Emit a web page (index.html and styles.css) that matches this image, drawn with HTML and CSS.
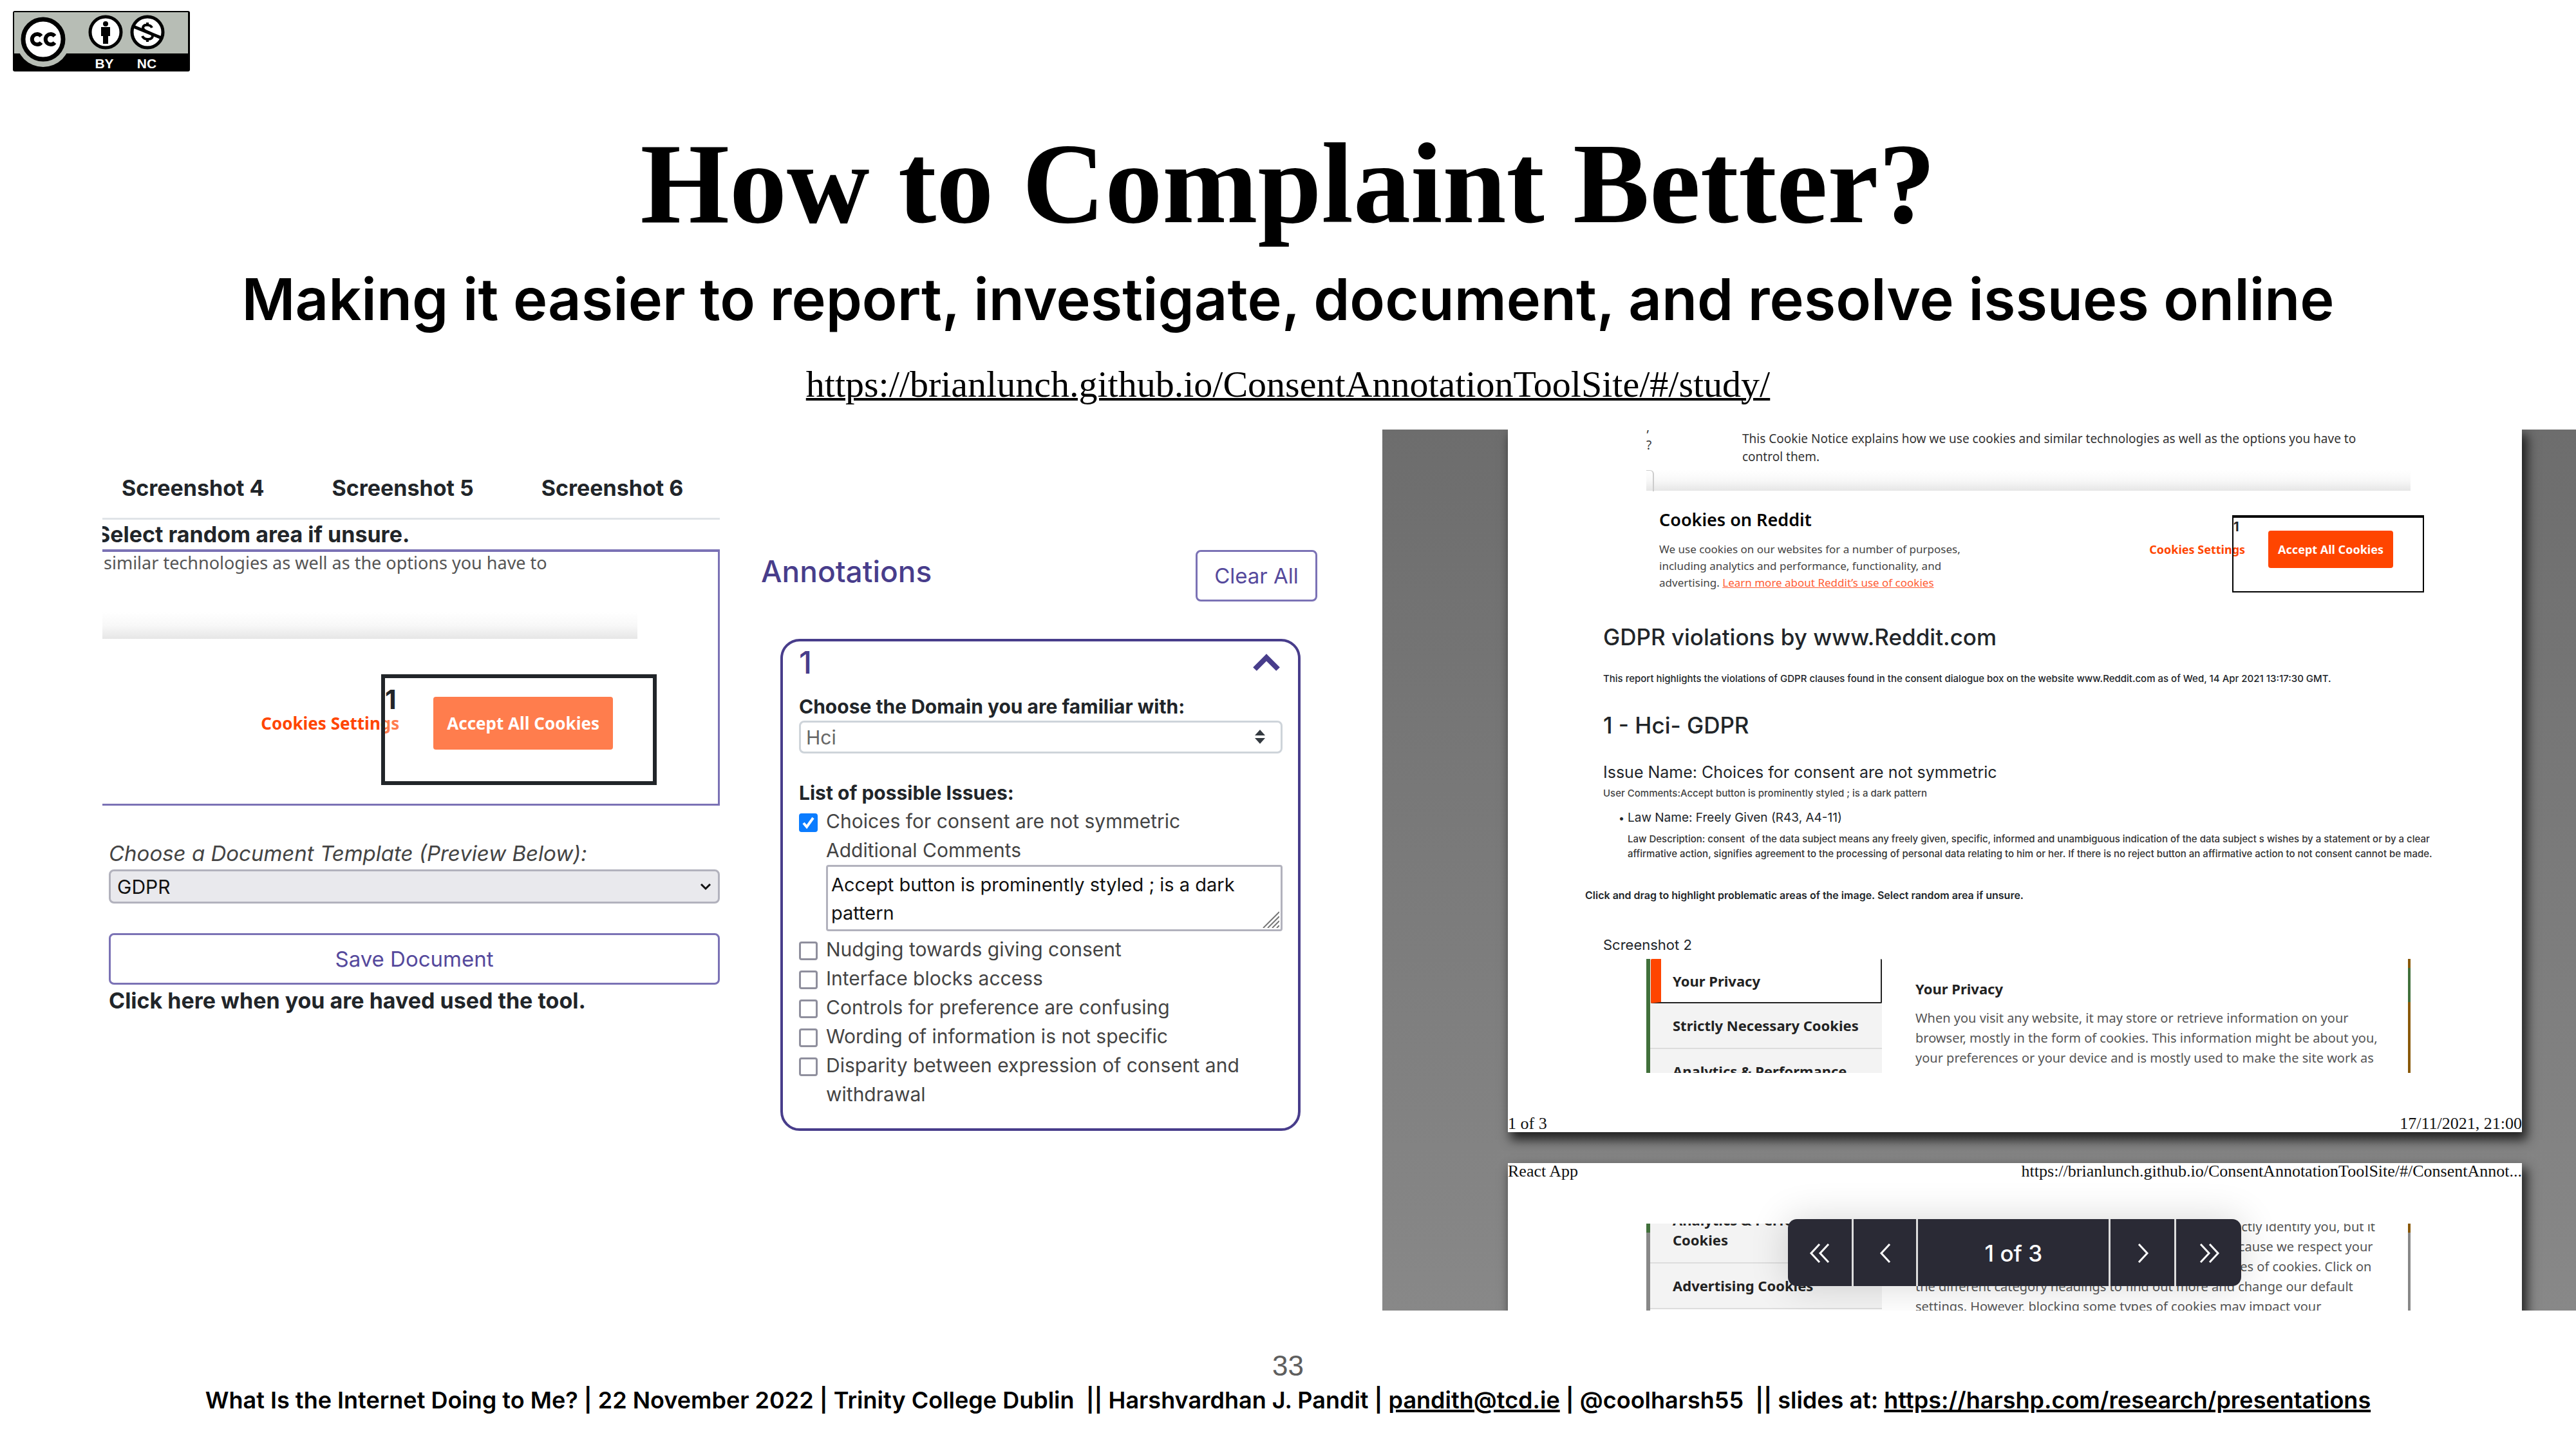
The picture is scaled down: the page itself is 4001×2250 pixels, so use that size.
FILE: index.html
```html
<!DOCTYPE html>
<html lang="en">
<head>
<meta charset="utf-8">
<title>How to Complaint Better?</title>
<link rel="stylesheet" href="styles.css">
</head>
<body>
<header class="slide-header">
  <svg class="license" viewBox="0 0 275 94" role="img" aria-label="Creative Commons BY NC">
    <rect x="0" y="0" width="275" height="94" rx="3" fill="#000"/>
    <rect x="2" y="2" width="270" height="64" fill="#b7bdb5"/>
    <circle cx="47" cy="45" r="42" fill="#b7bdb5"/>
    <circle cx="47" cy="44" r="31" fill="#fff" stroke="#000" stroke-width="7"/>
    <path d="M44 39a8 8 0 1 0 0 10M65 39a8 8 0 1 0 0 10" fill="none" stroke="#000" stroke-width="6"/>
    <circle cx="144" cy="33" r="24" fill="#fff" stroke="#000" stroke-width="5"/>
    <circle cx="144" cy="20" r="4"/>
    <path d="M137 25h14v14h-3v12h-8V39h-3z"/>
    <circle cx="209" cy="33" r="24" fill="#fff" stroke="#000" stroke-width="5"/>
    <path d="M216 26c-2-5-13-6-14 0 0 7 15 6 15 13 0 6-13 7-16 0M209 18v5M209 43v5" fill="none" stroke="#000" stroke-width="4"/>
    <path d="M187 24l44 18" stroke="#000" stroke-width="5"/>
    <text class="license-text" x="142" y="89">BY</text>
    <text class="license-text" x="208" y="89">NC</text>
  </svg>
  <h1 class="title">How to Complaint Better?</h1>
  <p class="subtitle">Making it easier to report, investigate, document, and resolve issues online</p>
  <a class="study-link" href="https://brianlunch.github.io/ConsentAnnotationToolSite/#/study/">https://brianlunch.github.io/ConsentAnnotationToolSite/#/study/</a>
</header>

<main class="figures">
  <section class="capture">
    <nav class="tabs">
      <a class="tab" href="#s4">Screenshot 4</a>
      <a class="tab" href="#s5">Screenshot 5</a>
      <a class="tab" href="#s6">Screenshot 6</a>
    </nav>
    <p class="hint">Select random area if unsure.</p>
    <div class="canvas">
      <p class="canvas-text">similar technologies as well as the options you have to</p>
      <div class="fade"></div>
      <div class="consent">
        <a class="consent-link" href="#settings">Cookies Settings</a>
        <button class="consent-accept" type="button">Accept All Cookies</button>
        <div class="mark">1</div>
      </div>
    </div>
    <form class="export">
      <label class="export-label" for="template">Choose a Document Template (Preview Below):</label>
      <div class="picker">
        <select class="template" id="template"><option>GDPR</option></select>
        <svg class="picker-icon" viewBox="0 0 18 12"><path d="M2 2l7 7 7-7" fill="none" stroke="#111" stroke-width="3"/></svg>
      </div>
      <button class="outline save" type="button">Save Document</button>
      <p class="export-note">Click here when you are haved used the tool.</p>
    </form>
  </section>

  <section class="annotations">
    <div class="annotations-head">
      <h2 class="annotations-title">Annotations</h2>
      <button class="outline clear" type="button">Clear All</button>
    </div>
    <form class="card">
      <div class="card-head">
        <span class="card-number">1</span>
        <svg class="card-toggle" viewBox="0 0 44 28"><path d="M4 24L22 6l18 18" fill="none" stroke="#483d8b" stroke-width="8"/></svg>
      </div>
      <label class="field-label" for="domain">Choose the Domain you are familiar with:</label>
      <div class="picker">
        <select class="domain" id="domain"><option>Hci</option></select>
        <svg class="picker-icon domain-icon" viewBox="0 0 16 22"><path d="M0 9l8-9 8 9zM0 13h16l-8 9z" fill="#343a40"/></svg>
      </div>
      <fieldset class="issues">
        <legend class="field-label">List of possible Issues:</legend>
        <label class="issue"><input class="tick" type="checkbox" checked><span>Choices for consent are not symmetric</span></label>
        <div class="comment">
          <label class="comment-label" for="comment">Additional Comments</label>
          <div class="comment-box">
            <textarea class="comment-input" id="comment" rows="2">Accept button is prominently styled ; is a dark pattern</textarea>
            <svg class="grip" viewBox="0 0 26 26"><path d="M1 26L26 1M8 26L26 8M15 26l11-11M22 26l4-4" stroke="#777" stroke-width="2"/></svg>
          </div>
        </div>
        <label class="issue"><input class="tick" type="checkbox"><span>Nudging towards giving consent</span></label>
        <label class="issue"><input class="tick" type="checkbox"><span>Interface blocks access</span></label>
        <label class="issue"><input class="tick" type="checkbox"><span>Controls for preference are confusing</span></label>
        <label class="issue"><input class="tick" type="checkbox"><span>Wording of information is not specific</span></label>
        <label class="issue"><input class="tick" type="checkbox"><span>Disparity between expression of consent and withdrawal</span></label>
      </fieldset>
    </form>
  </section>

  <section class="viewer">
    <article class="sheet">
      <div class="shot">
        <div class="notice">
          <p class="notice-edge">,<br>?</p>
          <p class="notice-text">This Cookie Notice explains how we use cookies and similar technologies as well as the options you have to<br>control them.</p>
        </div>
        <div class="fade small"></div>
        <div class="banner">
          <div class="banner-text">
            <h3 class="banner-title">Cookies on Reddit</h3>
            <p class="banner-body">We use cookies on our websites for a number of purposes,<br>including analytics and performance, functionality, and<br>advertising. <a class="learn" href="#cookies">Learn more about Reddit’s use of cookies</a></p>
          </div>
          <div class="consent small">
            <a class="consent-link" href="#settings">Cookies Settings</a>
            <button class="consent-accept" type="button">Accept All Cookies</button>
            <div class="mark">1</div>
          </div>
        </div>
      </div>
      <div class="report">
        <h2 class="report-title">GDPR violations by www.Reddit.com</h2>
        <p class="report-intro">This report highlights the violations of GDPR clauses found in the consent dialogue box on the website www.Reddit.com as of Wed, 14 Apr 2021 13:17:30 GMT.</p>
        <h2 class="report-title">1 - Hci- GDPR</h2>
        <h3 class="issue-title">Issue Name: Choices for consent are not symmetric</h3>
        <p class="issue-comment">User Comments:Accept button is prominently styled ; is a dark pattern</p>
        <ul class="laws">
          <li class="law">
            <h4 class="law-title">Law Name: Freely Given (R43, A4-11)</h4>
            <p class="law-text">Law Description: consent&nbsp; of the data subject means any freely given, specific, informed and unambiguous indication of the data subject s wishes by a statement or by a clear<br>affirmative action, signifies agreement to the processing of personal data relating to him or her. If there is no reject button an affirmative action to not consent cannot be made.</p>
          </li>
        </ul>
      </div>
      <p class="report-hint">Click and drag to highlight problematic areas of the image. Select random area if unsure.</p>
      <h3 class="shot-title">Screenshot 2</h3>
      <div class="shot privacy">
        <div class="menu">
          <a class="menu-item active" href="#privacy">Your Privacy</a>
          <a class="menu-item" href="#necessary">Strictly Necessary Cookies</a>
          <a class="menu-item" href="#analytics">Analytics &amp; Performance<br>Cookies</a>
        </div>
        <div class="privacy-text">
          <h4 class="privacy-title">Your Privacy</h4>
          <p class="privacy-body">When you visit any website, it may store or retrieve information on your<br>browser, mostly in the form of cookies. This information might be about you,<br>your preferences or your device and is mostly used to make the site work as<br>you expect it to. The information does not usually directly identify you, but it</p>
        </div>
      </div>
      <footer class="sheet-foot"><span>1 of 3</span><span>17/11/2021, 21:00</span></footer>
    </article>
    <article class="sheet next">
      <header class="sheet-head"><span>React App</span><span>https://brianlunch.github.io/ConsentAnnotationToolSite/#/ConsentAnnot...</span></header>
      <div class="shot privacy continued">
        <div class="menu">
          <a class="menu-item" href="#analytics">Analytics &amp; Performance<br>Cookies</a>
          <a class="menu-item" href="#advertising">Advertising Cookies</a>
        </div>
        <div class="privacy-text">
          <p class="privacy-body">you expect it to. The information does not usually directly identify you, but it<br>can give you a more personalized web experience. Because we respect your<br>right to privacy, you can choose not to allow some types of cookies. Click on<br>the different category headings to find out more and change our default<br>settings. However, blocking some types of cookies may impact your</p>
        </div>
      </div>
    </article>
    <div class="pager">
      <button class="pager-button" type="button" aria-label="First page"><svg class="pager-icon" viewBox="0 0 34 30"><path d="M16 1L3 15l13 14M30 1L17 15l13 14"/></svg></button>
      <button class="pager-button" type="button" aria-label="Previous page"><svg class="pager-icon" viewBox="0 0 34 30"><path d="M24 1L11 15l13 14"/></svg></button>
      <span class="pager-label">1 of 3</span>
      <button class="pager-button" type="button" aria-label="Next page"><svg class="pager-icon" viewBox="0 0 34 30"><path d="M11 1l13 14-13 14"/></svg></button>
      <button class="pager-button" type="button" aria-label="Last page"><svg class="pager-icon" viewBox="0 0 34 30"><path d="M4 1l13 14L4 29M18 1l13 14-13 14"/></svg></button>
    </div>
  </section>
</main>

<footer class="slide-footer">
  <p class="slide-number">33</p>
  <p class="credits">What Is the Internet Doing to Me? | 22 November 2022 | Trinity College Dublin&nbsp; || Harshvardhan J. Pandit | <a class="credit-link" href="mailto:pandith@tcd.ie">pandith@tcd.ie</a> | @coolharsh55&nbsp; || slides at: <a class="credit-link" href="https://harshp.com/research/presentations">https://harshp.com/research/presentations</a></p>
</footer>
</body>
</html>
```
FILE: styles.css
```css
* { box-sizing: border-box; }

body {
  margin: 0;
  background: #fff;
  color: #212529;
  font-family: Inter, "Liberation Sans", sans-serif;
  --purple: #483d8b;
  --orange: #ff4500;
}

h1, h2, h3, h4, p, ul { margin: 0; padding: 0; font-weight: inherit; }
a { color: inherit; text-decoration: none; }
button, select, textarea { font-family: inherit; margin: 0; }

/* Slide heading */
.slide-header {
  display: flex;
  flex-direction: column;
  align-items: center;
  padding: 17px 20px 30px;
  color: #000;
}
.license { align-self: flex-start; width: 275px; height: 94px; }
.license-text {
  fill: #fff;
  font: bold 21px "Liberation Sans", sans-serif;
  text-anchor: middle;
}
.title {
  margin-top: 74px;
  font: bold 178px/200px "Liberation Serif", serif;
}
.subtitle {
  margin: 30px 0 42px;
  font-size: 90px;
  font-weight: 600;
  line-height: 100px;
}
.study-link {
  font: 58px/80px "Liberation Serif", serif;
  text-decoration: underline;
  text-decoration-thickness: 4px;
}

.figures {
  display: grid;
  grid-template-columns: 959fr 864fr 1891fr;
  column-gap: 64px;
  align-items: start;
  padding-left: 159px;
}

/* Screenshot annotator */
.capture { padding-top: 69px; overflow: hidden; }
.tabs {
  display: flex;
  gap: 105px;
  padding: 0 0 24px 30px;
  border-bottom: 3px solid #e0e4e8;
  font-size: 34px;
  font-weight: 700;
  line-height: 44px;
}
.hint {
  text-indent: -10px;
  font-size: 34px;
  font-weight: 700;
  line-height: 46px;
}
.canvas {
  padding-bottom: 84px;
  border: solid #7b72b5;
  border-width: 4px 3px 3px 0;
}
.canvas-text {
  padding-left: 2px;
  color: #555;
  font: 27px/34px "Noto Sans", sans-serif;
}
.fade {
  height: 42px;
  margin: 59px 125px 90px 0;
  background: linear-gradient(#fff, #f8f8f8 50%, #e6e6e6);
}
.consent {
  position: relative;
  display: flex;
  justify-content: flex-end;
  align-items: center;
  gap: 53px;
  padding-right: 163px;
  font: bold 26px/34px "Noto Sans", sans-serif;
}
.consent-link { color: var(--orange); }
.consent-accept {
  height: 82px;
  padding: 0 21px;
  border: 0;
  border-radius: 4px;
  background: var(--orange);
  color: #fff;
  font: inherit;
}
.mark {
  position: absolute;
  top: -35px;
  right: 95px;
  width: 428px;
  height: 172px;
  border: 6px solid #212529;
  padding-top: 8px;
  background: rgba(255, 255, 255, .3);
  font: 700 41px/50px Inter, sans-serif;
}

.export {
  display: flex;
  flex-direction: column;
  padding: 52px 0 0 10px;
  font-size: 33px;
  line-height: 44px;
}
.export-label { color: #444; font-style: italic; }
.picker { position: relative; display: flex; }
.template, .domain { appearance: none; width: 100%; }
.template {
  height: 53px;
  margin-top: 3px;
  padding: 0 10px;
  border: 3px solid #b2b2bd;
  border-radius: 8px;
  background: #e9e9ed;
  color: #111;
  font-size: 30px;
}
.picker-icon {
  position: absolute;
  top: 24px;
  right: 13px;
  width: 18px;
  height: 12px;
}
.outline {
  height: 80px;
  border: 3px solid #7b72b5;
  border-radius: 8px;
  background: #fff;
  color: #55499c;
  font-size: 33px;
}
.save { margin: 46px 0 3px; }
.export-note { font-size: 34px; font-weight: 700; }

/* Annotation panel */
.annotations { padding-top: 187px; }
.annotations-head {
  display: flex;
  justify-content: space-between;
  align-items: flex-start;
  color: var(--purple);
}
.annotations-title { font-size: 46px; font-weight: 500; line-height: 66px; }
.clear { width: 189px; padding: 0; }
.card {
  margin: 58px 26px 0 30px;
  padding: 7px 24px 30px 25px;
  border: 4px solid var(--purple);
  border-radius: 30px;
  font-size: 30px;
  line-height: 45px;
}
.card-head {
  display: flex;
  justify-content: space-between;
  align-items: center;
  padding-right: 3px;
  margin-bottom: 20px;
  color: var(--purple);
  font-size: 48px;
  font-weight: 500;
  line-height: 52px;
}
.card-toggle { width: 44px; height: 28px; }
.field-label { display: block; padding: 0; font-weight: 700; line-height: 44px; }
.domain {
  height: 51px;
  padding: 0 8px;
  border: 3px solid #ced4da;
  border-radius: 8px;
  background: #fff;
  color: #666;
  font-size: 30px;
}
.domain-icon { top: 14px; right: 27px; width: 16px; height: 22px; }
.issues { margin: 39px 0 0; padding: 0; border: 0; min-width: 0; color: #444; }
.issues .field-label { color: #212529; }
.issue { display: flex; gap: 13px; align-items: flex-start; }
.tick {
  appearance: none;
  flex: none;
  width: 29px;
  height: 29px;
  margin: 10px 0 0;
  border: 3px solid #8f8f9d;
  border-radius: 4px;
  background: #fff;
}
.tick:checked {
  border-color: #0a7cff;
  background: #0a7cff url("data:image/svg+xml,%3Csvg xmlns='http://www.w3.org/2000/svg' viewBox='0 0 23 23'%3E%3Cpath d='M4 12l5 6L19 4' fill='none' stroke='white' stroke-width='4'/%3E%3C/svg%3E");
}
.comment { display: flex; flex-direction: column; padding: 0 0 6px 42px; }
.comment-box { position: relative; display: flex; }
.comment-input {
  width: 100%;
  height: 103px;
  padding: 6px 5px;
  border: 3px solid #b2b2bd;
  border-radius: 4px;
  overflow: hidden;
  resize: none;
  color: #111;
  font-size: 29px;
  line-height: 44px;
}
.grip { position: absolute; right: 5px; bottom: 5px; width: 26px; height: 26px; }

/* Document preview */
.viewer {
  position: relative;
  height: 1368px;
  margin-left: 37px;
  padding: 0 84px 0 195px;
  overflow: hidden;
  background: linear-gradient(#6d6d6d, #888);
}
.sheet {
  background: #fff;
  box-shadow: 6px 10px 16px 2px rgba(0, 0, 0, .75);
}
.next { margin-top: 48px; }
.shot { margin: 0 173px 0 215px; font-family: "Noto Sans", sans-serif; }
.notice {
  display: grid;
  grid-template-columns: 149px 1fr;
  color: #333;
  font-size: 19px;
  line-height: 28px;
  white-space: nowrap;
}
.notice-edge { margin-top: -18px; }
.fade.small { height: 32px; margin: 7px 0 28px; }
.fade.small::before {
  content: "";
  display: block;
  width: 10px;
  height: 32px;
  border: solid #ccc;
  border-width: 1px 2px 0 0;
  border-top-right-radius: 6px;
}
.banner { display: flex; justify-content: space-between; align-items: flex-start; padding-left: 20px; }
.banner-title { font-size: 27px; font-weight: 600; line-height: 34px; color: #000; }
.banner-body { margin-top: 16px; color: #444; font-size: 17px; line-height: 26px; }
.learn { color: #ff5c33; text-decoration: underline; }
.consent.small {
  gap: 36px;
  margin-top: 34px;
  padding-right: 27px;
  font-size: 18px;
}
.small .consent-accept { height: 58px; padding: 0 15px; }
.small .mark {
  top: -24px;
  right: -21px;
  width: 298px;
  height: 120px;
  border-width: 4px 2px 2px;
  border-color: #000;
  padding-top: 2px;
  background: none;
  font-size: 20px;
  line-height: 24px;
}

.report { padding: 47px 0 0 148px; font-size: 15px; line-height: 24px; white-space: nowrap; }
.report-title { font-size: 35px; font-weight: 500; line-height: 48px; }
.report-intro { margin: 29px 0 36px; font-weight: 500; }
.issue-title { margin-top: 32px; font-size: 25px; line-height: 34px; }
.issue-comment { margin: 4px 0 12px; color: #444; font-weight: 500; }
.laws { padding-left: 38px; list-style: none; }
.law-title { font-size: 19px; line-height: 28px; margin-bottom: 7px; }
.law-title::before { content: "•"; float: left; width: 14px; margin-left: -14px; font-size: 16px; }
.law-text { line-height: 23px; color: #333; font-weight: 500; }
.report-hint { margin-top: 41px; padding-left: 120px; font-size: 16px; font-weight: 600; line-height: 24px; }
.shot-title { margin: 49px 0 6px 148px; font-size: 22px; line-height: 32px; }

.privacy {
  display: grid;
  grid-template-columns: 360px 1fr;
  align-items: start;
  height: 177px;
  padding: 0 4px 0 6px;
  overflow: hidden;
  background:
    linear-gradient(#41703b, #41703b) left / 6px 100% no-repeat,
    linear-gradient(#8a5a0a 14px, #41703b 14px 67px, #8a5a0a 67px) right / 4px 100% no-repeat;
}
.menu { background: #f3f3f3; color: #222; font-weight: bold; font-size: 22px; line-height: 31px; }
.menu-item { display: block; padding: 19px 10px 19px 35px; border-bottom: 2px solid #ddd; }
.menu-item.active {
  margin-left: 1px;
  padding: 19px 10px 17px 18px;
  border: 2px solid #222;
  border-top: 0;
  border-left: 16px solid var(--orange);
  border-radius: 2px;
  background: #fff;
}
.privacy-text { padding: 31px 0 0 52px; white-space: nowrap; color: #555; }
.privacy-title { margin-bottom: 14px; color: #222; font-size: 22px; font-weight: bold; line-height: 31px; }
.privacy-body { font-size: 20px; line-height: 31px; }
.continued {
  height: 136px;
  margin-top: 68px;
  background:
    linear-gradient(#41703b 14px, #888 14px) left / 6px 100% no-repeat,
    linear-gradient(#8a5a0a 14px, #888 14px) right / 4px 100% no-repeat;
}
.continued .menu { margin-top: -40px; }
.continued .privacy-text { padding-top: 0; margin-top: -11px; }
.sheet-foot, .sheet-head {
  display: flex;
  justify-content: space-between;
  color: #111;
  font: 26px/26px "Liberation Serif", serif;
}
.sheet-foot { margin-top: 66px; }

.pager {
  position: absolute;
  left: 34%;
  bottom: 38px;
  display: grid;
  grid-template-columns: 99px 100px 299px 102px 1fr;
  width: 704px;
  height: 104px;
  overflow: hidden;
  border-radius: 14px;
  background: #2a2a35;
  box-shadow: 0 0 60px rgba(0, 0, 0, .16);
  color: #fff;
}
.pager-button {
  display: grid;
  place-items: center;
  padding: 0;
  border: 0;
  background: none;
}
.pager > * + * { border-left: 3px solid #ddd; }
.pager-icon { width: 34px; height: 30px; fill: none; stroke: #fff; stroke-width: 3; }
.pager-label { font-size: 35px; font-weight: 500; line-height: 106px; text-align: center; }

/* Slide footer */
.slide-footer { padding: 61px 20px 0; text-align: center; color: #000; }
.slide-number { color: #5e5e5e; font: 44px/50px "Liberation Sans", sans-serif; }
.credits { margin-top: 3px; font-size: 36px; font-weight: 600; line-height: 50px; }
.credit-link { text-decoration: underline; text-decoration-thickness: 4px; }
```
